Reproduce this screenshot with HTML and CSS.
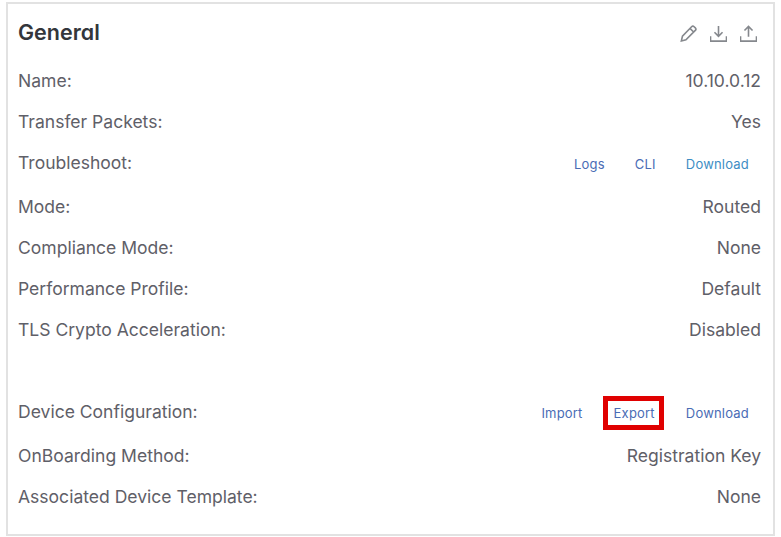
FILE: index.html
```
<!DOCTYPE html>
<html lang="en">
<head>
<meta charset="utf-8">
<title>General</title>
<link rel="stylesheet" href="styles.css">
</head>
<body>
<section class="card">
  <header class="card-head">
    <h2 class="title">General</h2>
    <div class="tools">
      <svg class="icon" viewBox="1 1 16 16"><path d="M11.9 2.6a1.7 1.7 0 0 1 2.4 0l1.1 1.1a1.7 1.7 0 0 1 0 2.4L6.6 14.9 2.3 16l1-4.4z M10.4 4.2l3.4 3.4"/></svg>
      <svg class="icon" viewBox="1 1 16 16"><path d="M9 2v9.5 M5.2 7.8 9 11.6l3.8-3.8 M1.5 11.5v4.7h15v-4.7"/></svg>
      <svg class="icon" viewBox="1 1 16 16"><path d="M9 12V2.4 M5.2 6.2 9 2.4l3.8 3.8 M1.5 11.5v4.7h15v-4.7"/></svg>
    </div>
  </header>
  <div class="row"><span>Name:</span><span>10.10.0.12</span></div>
  <div class="row"><span>Transfer Packets:</span><span>Yes</span></div>
  <div class="row row-links">
    <span>Troubleshoot:</span>
    <span class="links links-tight"><a class="link">Logs</a><a class="link">CLI</a><a class="link link-light">Download</a></span>
  </div>
  <div class="row"><span>Mode:</span><span>Routed</span></div>
  <div class="row"><span>Compliance Mode:</span><span>None</span></div>
  <div class="row"><span>Performance Profile:</span><span>Default</span></div>
  <div class="row"><span>TLS Crypto Acceleration:</span><span>Disabled</span></div>
  <div class="spacer"></div>
  <div class="row row-links">
    <span>Device Configuration:</span>
    <span class="links"><a class="link">Import</a><a class="link highlighted">Export</a><a class="link">Download</a></span>
  </div>
  <div class="row"><span>OnBoarding Method:</span><span>Registration Key</span></div>
  <div class="row"><span>Associated Device Template:</span><span>None</span></div>
</section>
</body>
</html>
```
FILE: styles.css
```
* { box-sizing: border-box; }
html, body { margin: 0; height: 100%; background: #fff; overflow: hidden; }
body { padding: 2px 6px 1px 6px; font-family: Inter, "Liberation Sans", sans-serif; }
.card {
  width: 769px;
  height: 534px;
  border: 2px solid #e2e2e2;
  padding: 0 12px 0 10px;
  color: #5f6068;
  font-size: 17.55px;
}
.card-head {
  display: flex;
  justify-content: space-between;
  align-items: center;
  height: 56px;
}
.title {
  margin: 0;
  font-size: 21.5px;
  font-weight: 600;
  color: #33363b;
  font-feature-settings: "cv11" 1;
}
.tools { display: flex; gap: 13px; padding: 2px 4px 0 0; }
.icon {
  display: block;
  width: 17px;
  height: 17px;
  fill: none;
  stroke: #85888d;
  stroke-width: 1.5;
}
.row {
  display: flex;
  justify-content: space-between;
  align-items: center;
  height: 41px;
}
.row-links { height: 44px; padding-bottom: 4px; }
.spacer { height: 41px; }
.links { display: flex; gap: 31px; padding-right: 12px; padding-top: 4px; }
.links-tight { gap: 30px; }
.link { position: relative; font-size: 13px; color: #4a6cb5; letter-spacing: 0.2px; }
.link-light { color: #3d8dc4; }
.highlighted::after {
  content: "";
  position: absolute;
  left: -11px;
  right: -9px;
  top: -9px;
  bottom: -9px;
  border: 5px solid #e00000;
}
```
